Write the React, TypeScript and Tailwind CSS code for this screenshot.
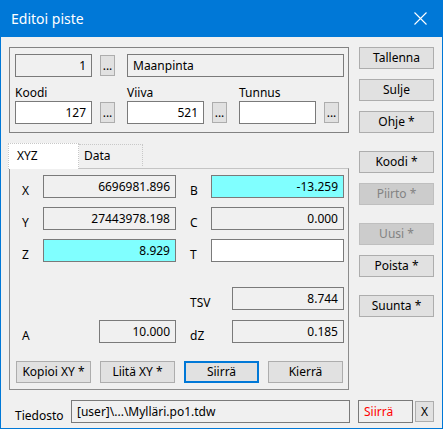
import React from "react";

type FieldProps = {
  value?: string;
  w: string;
  tone?: "ro" | "white" | "cyan";
  align?: "left" | "right";
  red?: boolean;
};

function Field({ value = "", w, tone = "ro", align = "right", red }: FieldProps) {
  const bg =
    tone === "cyan" ? "bg-[#80ffff]" : tone === "white" ? "bg-white" : "bg-[#f0f0f0]";
  return (
    <div
      className={`${w} ${bg} h-[23px] shrink-0 border border-[#7a7a7a] flex items-center px-[5px] ${
        align === "right" ? "justify-end" : "justify-start"
      } ${red ? "text-[#ff0000]" : "text-black"}`}
    >
      {value}
    </div>
  );
}

function Btn({
  label,
  disabled,
  focused,
  className = "",
}: {
  label: string;
  disabled?: boolean;
  focused?: boolean;
  className?: string;
}) {
  return (
    <div
      className={`w-[75px] h-[22px] shrink-0 flex items-center justify-center ${
        disabled
          ? "bg-[#cccccc] border border-[#bfbfbf] text-[#838383]"
          : focused
          ? "bg-[#e1e1e1] border-2 border-[#0078d7] text-black"
          : "bg-[#e1e1e1] border border-[#adadad] text-black"
      } ${className}`}
    >
      {label}
    </div>
  );
}

function Dots({ className = "" }: { className?: string }) {
  return (
    <div
      className={`w-[15px] h-[21px] shrink-0 bg-[#e1e1e1] border border-[#adadad] flex items-end justify-center pb-[3px] leading-none ${className}`}
    >
      ...
    </div>
  );
}

function Label({ text, w, pl = "pl-[12px]" }: { text: string; w: string; pl?: string }) {
  return <div className={`${w} ${pl} shrink-0 self-end translate-y-[2px]`}>{text}</div>;
}

export default function App() {
  return (
    <div
      className="w-[443px] h-[429px] bg-[#f0f0f0] border-x border-b border-[#0078d7] flex flex-col text-[12px] text-black"
      style={{ fontFamily: '"Noto Sans", "Open Sans", sans-serif' }}
    >
      {/* TITLE BAR */}
      <div className="h-[37px] -mx-px bg-[#0078d7] flex items-center justify-between pl-[11px] pr-[16px] shrink-0">
        <span className="text-white text-[14px]">Editoi piste</span>
        <svg width="13" height="13" viewBox="0 0 13 13" className="shrink-0">
          <path d="M0.5 0.5 L12.5 12.5 M12.5 0.5 L0.5 12.5" stroke="#ffffff" strokeWidth="1.1" />
        </svg>
      </div>

      <div className="flex pl-[8px] pt-[10px]">
        {/* LEFT COLUMN */}
        <div className="w-[340px] flex flex-col">
          {/* GROUP BOX */}
          <div className="h-[86px] border border-[#828282] pl-[5px] pt-[6px] flex flex-col">
            <div className="flex items-center">
              <Field value="1" w="w-[77px]" />
              <Dots className="ml-[8px]" />
              <div className="ml-[12px]">
                <Field value="Maanpinta" w="w-[217px]" align="left" tone="ro" />
              </div>
            </div>
            <div className="flex mt-[7px]">
              {[
                { l: "Koodi", v: "127" },
                { l: "Viiva", v: "521" },
                { l: "Tunnus", v: "" },
              ].map((g, i) => (
                <div key={g.l} className={`flex flex-col ${i > 0 ? "ml-[12px]" : ""}`}>
                  <div className="h-[17px] leading-[17px]">{g.l}</div>
                  <div className="flex items-center">
                    <Field value={g.v} w="w-[77px]" tone="white" />
                    <Dots className="ml-[8px]" />
                  </div>
                </div>
              ))}
            </div>
          </div>

          {/* TABS */}
          <div className="flex items-end mt-[10px] h-[25px]">
            <div className="relative z-10 -ml-px w-[71px] h-[26px] -mb-px bg-white border-t border-x border-dotted border-[#c8c8c8] pl-[8px] pt-[3px]">
              XYZ
            </div>
            <div className="w-[64px] h-[22px] mb-[2px] border-t border-r border-dotted border-[#c8c8c8] pl-[5px] pt-[2px]">
              Data
            </div>
          </div>

          {/* TAB PANEL */}
          <div className="h-[222px] border border-[#8c8c8c] border-t-[#c4c4c4] pt-[6px] flex flex-col">
            {[
              { a: "X", av: "6696981.896", at: "ro", b: "B", bv: "-13.259", bt: "cyan" },
              { a: "Y", av: "27443978.198", at: "ro", b: "C", bv: "0.000", bt: "ro" },
              { a: "Z", av: "8.929", at: "cyan", b: "T", bv: "", bt: "white" },
            ].map((r, i) => (
              <div key={r.a} className={`flex ${i > 0 ? "mt-[9px]" : ""}`}>
                <Label text={r.a} w="w-[33px]" />
                <Field value={r.av} w="w-[133px]" tone={r.at as "ro"} />
                <Label text={r.b} w="w-[35px]" pl="pl-[14px]" />
                <Field value={r.bv} w="w-[133px]" tone={r.bt as "ro"} />
              </div>
            ))}

            <div className="flex mt-[25px]">
              <div className="w-[166px] shrink-0" />
              <Label text="TSV" w="w-[56px]" pl="pl-[14px]" />
              <Field value="8.744" w="w-[112px]" />
            </div>
            <div className="flex mt-[10px]">
              <Label text="A" w="w-[89px]" />
              <Field value="10.000" w="w-[77px]" />
              <Label text="dZ" w="w-[56px]" pl="pl-[14px]" />
              <Field value="0.185" w="w-[112px]" />
            </div>

            <div className="flex gap-[9px] pl-[6px] mt-[18px]">
              <Btn label="Kopioi XY *" />
              <Btn label="Liitä XY *" />
              <Btn label="Siirrä" focused />
              <Btn label="Kierrä" />
            </div>
          </div>
        </div>

        {/* RIGHT COLUMN */}
        <div className="ml-[10px] flex flex-col">
          <Btn label="Tallenna" />
          <Btn label="Sulje" className="mt-[10px]" />
          <Btn label="Ohje *" className="mt-[10px]" />
          <Btn label="Koodi *" className="mt-[18px]" />
          <Btn label="Piirto *" disabled className="mt-[10px]" />
          <Btn label="Uusi *" disabled className="mt-[18px]" />
          <Btn label="Poista *" className="mt-[10px]" />
          <Btn label="Suunta *" className="mt-[18px]" />
        </div>
      </div>

      {/* FILE ROW */}
      <div className="flex items-center pl-[8px] mt-[10px]">
        <div className="w-[62px] pl-[6px] self-end translate-y-[2px]">Tiedosto</div>
        <Field value="[user]\...\Mylläri.po1.tdw" w="w-[279px]" align="left" />
        <div className="ml-[8px]">
          <Field value="Siirrä" w="w-[55px]" align="left" red />
        </div>
        <div className="ml-[2px] w-[19px] h-[21px] bg-[#e1e1e1] border border-[#adadad] flex items-center justify-center">
          X
        </div>
      </div>
    </div>
  );
}
